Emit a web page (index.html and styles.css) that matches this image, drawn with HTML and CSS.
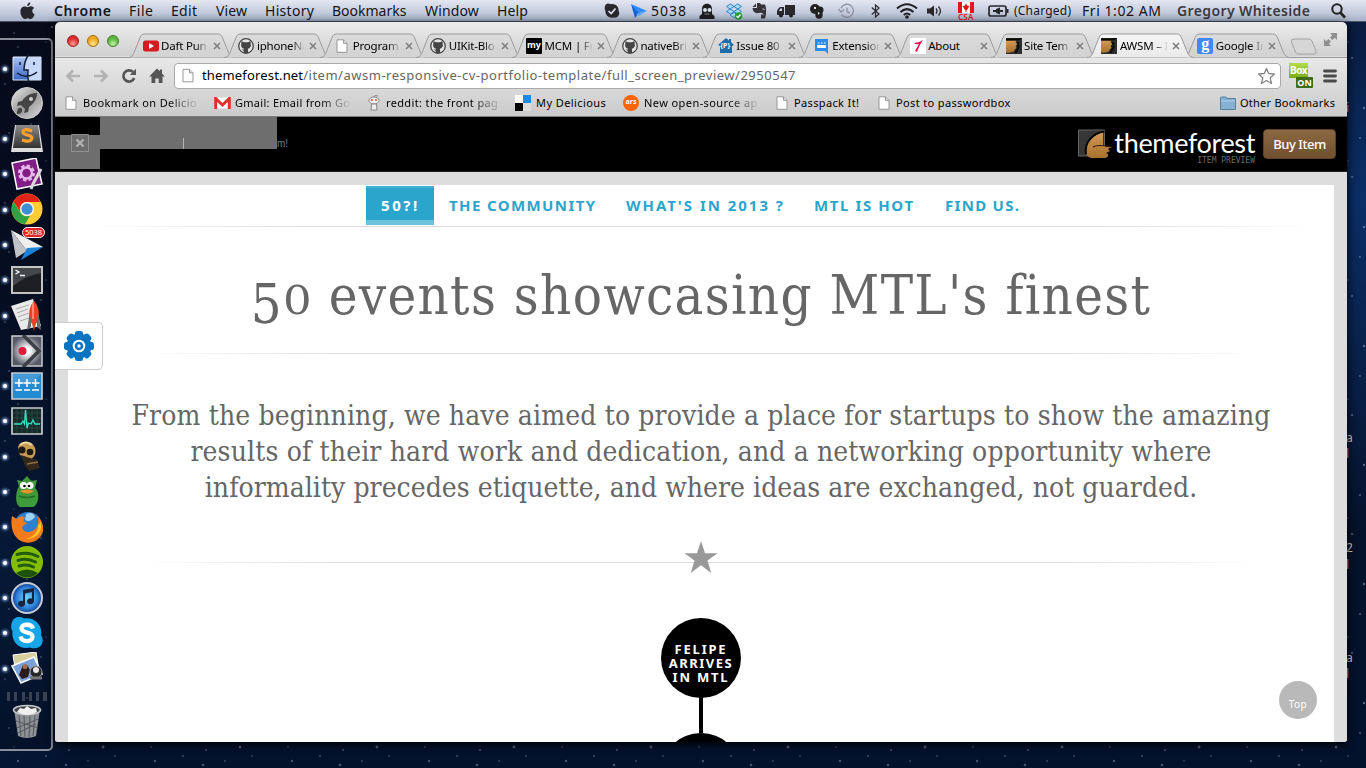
FILE: index.html
```html
<!DOCTYPE html>
<html lang="en">
<head>
<meta charset="utf-8">
<title>AWSM</title>
<link rel="stylesheet" href="styles.css">
</head>
<body>
<svg class="defs" width="0" height="0">
  <defs>
    <linearGradient id="gTab" x1="0" y1="0" x2="0" y2="1"><stop offset="0" stop-color="#dcdcdc"/><stop offset="1" stop-color="#d2d2d2"/></linearGradient>
    <linearGradient id="gAct" x1="0" y1="0" x2="0" y2="1"><stop offset="0" stop-color="#f6f6f6"/><stop offset="1" stop-color="#e9e9e9"/></linearGradient>
    <linearGradient id="gBlue" x1="0" y1="0" x2="0" y2="1"><stop offset="0" stop-color="#a9c4f5"/><stop offset="1" stop-color="#3a66c4"/></linearGradient>
    <linearGradient id="gSteel" x1="0" y1="0" x2="1" y2="1"><stop offset="0" stop-color="#eee"/><stop offset=".5" stop-color="#999"/><stop offset="1" stop-color="#ddd"/></linearGradient>
    <linearGradient id="gDark" x1="0" y1="0" x2="0" y2="1"><stop offset="0" stop-color="#8a8a8a"/><stop offset="1" stop-color="#333"/></linearGradient>
    <radialGradient id="gTunes"><stop offset="0" stop-color="#6fd8ff"/><stop offset=".7" stop-color="#2a80d8"/><stop offset="1" stop-color="#123a8a"/></radialGradient>
    <radialGradient id="gNode"><stop offset=".2" stop-color="#fff"/><stop offset="1" stop-color="#555a68"/></radialGradient>
    <linearGradient id="gWood" x1="0" y1="0" x2="0" y2="1"><stop offset="0" stop-color="#d49a55"/><stop offset="1" stop-color="#a8712e"/></linearGradient>
    <pattern id="stars" width="137" height="119" patternUnits="userSpaceOnUse">
      <g fill="#9fb4d4"><circle cx="9" cy="14" r="1" opacity=".6"/><circle cx="31" cy="5" r="1.300" opacity=".4"/><circle cx="52" cy="27" r=".9" opacity=".6"/><circle cx="77" cy="11" r="1.200" opacity=".5"/><circle cx="103" cy="33" r="1.400" opacity=".5"/><circle cx="127" cy="19" r=".9" opacity=".5"/><circle cx="18" cy="47" r="1.200" opacity=".4"/><circle cx="41" cy="62" r="1" opacity=".6"/><circle cx="66" cy="51" r="1.300" opacity=".4"/><circle cx="92" cy="70" r=".9" opacity=".7"/><circle cx="119" cy="58" r="1.200" opacity=".4"/><circle cx="5" cy="84" r="1.300" opacity=".4"/><circle cx="27" cy="103" r="1" opacity=".6"/><circle cx="58" cy="91" r="1.200" opacity=".4"/><circle cx="81" cy="110" r="1.400" opacity=".4"/><circle cx="109" cy="97" r=".9" opacity=".6"/><circle cx="131" cy="108" r="1.200" opacity=".5"/><circle cx="14" cy="33" r=".8" opacity=".5"/><circle cx="46" cy="42" r=".8" opacity=".6"/><circle cx="88" cy="47" r=".8" opacity=".5"/><circle cx="69" cy="36" r="1.100" opacity=".4"/><circle cx="115" cy="42" r=".8" opacity=".5"/></g>
    </pattern>
    <symbol id="tab" viewBox="0 0 108 25" preserveAspectRatio="none"><path d="M0 24.5C5 24.5 6 20 7.500 16L12 5C13 2 14.500 1 17 1H90.500C93 1 94.500 2 95.500 5L100 16C101.500 20 103 24.500 108 24.500" stroke="#9a9a9a"/></symbol>
    <symbol id="page" viewBox="0 0 12 14"><path d="M1 .8H7.500L11 4.300V13.300H1Z" fill="#fdfdfd" stroke="#979797"/><path d="M7.500 .8V4.300H11" fill="#ddd" stroke="#979797"/></symbol>
    <symbol id="github" viewBox="0 0 16 16"><circle cx="8" cy="8" r="7.300" fill="#e6e6e6" stroke="#444" stroke-width="1.300"/><path d="M3.600 3L6 4.200H10L12.400 3L12.800 6C13.200 9 12 10.300 9.800 10.800L10.300 15H5.700V12.800L3.400 11.600L5.700 11.500L6.200 10.800C4 10.300 2.800 9 3.200 6Z" fill="#444"/></symbol>
    <symbol id="close" viewBox="0 0 8 8"><path d="M1 1L7 7M7 1L1 7" stroke="#7d7d7d" stroke-width="1.500"/></symbol>
    <symbol id="forest" viewBox="0 0 16 16"><path d="M0 0H16V16H0Z" fill="#2e2e2e"/><path d="M0 2.500H10.500L9.500 5L11.500 5.500L9.500 8L10.500 10L8.500 11.500L8 13.500Q4 15 0 14.500Z" fill="url(#gWood)"/><path d="M0 1.500H12L15.500 0M9.500 15L12.500 9L12 4" fill="none" stroke="#0c0a05" stroke-width="1.800"/></symbol>
  </defs>
</svg>
<svg class="sky"><rect width="1366" height="768" fill="url(#stars)"/></svg>
<div class="labels"><i>i</i><i>a</i><i>l</i><i>2</i><i>l</i><i>a</i><i>l</i></div>

<header class="menubar">
  <svg width="15" height="18" viewBox="0 0 15 18"><path d="M10.300 .3C10.500 2 9 4 7.200 4.100C7 2.300 8.700 .5 10.300 .3ZM7.500 5.200C8.500 5.200 9.200 4.300 10.800 4.300C12.300 4.400 13.300 5 14 6C11.500 7.500 11.800 11 14.600 12.200C13.800 14.500 12.500 17 10.900 17C9.600 17 9.200 16.200 7.800 16.200C6.300 16.200 5.800 17 4.700 17C2.800 17 .4 13 .4 9.500C.4 6.300 2.400 4.500 4.500 4.500C5.800 4.500 6.700 5.200 7.500 5.200Z" fill="#26262c"/></svg>
  <b class="w1">Chrome</b><span class="w2">File</span><span class="w3">Edit</span><span class="w4">View</span><span class="w3">History</span><span>Bookmarks</span><span class="w4">Window</span><span class="w4">Help</span>
  <svg width="16" height="16" viewBox="0 0 16 16"><path d="M1 3C2 0 5 0 6.500 1.200C11 0 15 3.500 14.600 8C16.500 11 14 15.500 10 14.500C5.500 15.500 1 12.500 1.500 8C.5 6.500 .5 5 1 3Z" fill="#29292d"/><path d="M4.500 8L7.200 10.500L11.500 5.500" fill="none" stroke="#dde2ef" stroke-width="1.700"/></svg>
  <svg width="16" height="16" viewBox="0 0 16 16"><path d="M0 1L16 8L8 10Z" fill="#2d8cff"/><path d="M0 1L8 10L4 15Z" fill="#1464d8"/><path d="M5 11L16 8L8 13Z" fill="#5aa8ff"/></svg>
  <span class="w5">5038</span>
  <svg width="16" height="18" viewBox="0 0 16 18"><path d="M3 7C3 0 13 0 13 7V12L15.500 14V17H.5V14L3 12Z" fill="#1f1f22"/><circle cx="6" cy="8" r="2" fill="#d9deea"/><circle cx="10.500" cy="8" r="2" fill="#d9deea"/><path d="M5.500 12H10.500" stroke="#888"/></svg>
  <svg width="17" height="17" viewBox="0 0 17 17"><path d="M4.500 1L8 3.500L4 6L.5 3.500ZM11.500 1L15.500 3.500L12 6L8 3.500ZM4 6L8 8.500L4.500 11L.5 8.500ZM12 6L15.500 8.500L11.500 11L8 8.500ZM4 12L8 9.500L12 12L8 14.500Z" fill="#a8dcfa" stroke="#2b86c8"/><circle cx="12.500" cy="13" r="3.800" fill="#29a03a"/><path d="M10.500 13L12 14.500L14.500 11.500" stroke="#fff" fill="none" stroke-width="1.300"/></svg>
  <svg width="15" height="16" viewBox="0 0 15 16"><path d="M.5 4L4 .5V4ZM5 0H8L9 1.500H13C14.500 5 14.500 11 13 15.500H9V11.500H11V13.500C12 11 11 9.500 8 9.800C3 11 1 9 .5 5H5Z" fill="#333338"/><path d="M10.500 6Q12 5.500 12.500 7" stroke="#ccd3e3" fill="none"/></svg>
  <svg width="19" height="13" viewBox="0 0 19 13"><path d="M8 0H18V10H8ZM1 4L3 2H7V10H0V6Z" fill="#29292d"/><path d="M2 6L3.300 3.500H5V6Z" fill="#cdd4e3"/><circle cx="4" cy="10.500" r="2" fill="#222"/><circle cx="14" cy="10.500" r="2" fill="#222"/></svg>
  <svg width="14" height="15" viewBox="0 0 14 15"><circle cx="5" cy="5" r="5" fill="#222"/><circle cx="10" cy="6" r="3.500" fill="#222"/><circle cx="9" cy="11" r="3.700" fill="#222"/><path d="M4 3H6V5H4ZM8 8L10 9L8 11Z" fill="#dde"/></svg>
  <svg width="17" height="16" viewBox="0 0 17 16"><path d="M3 5A6.500 6.500 0 1 1 3.500 11.500M.5 6L3 9L6 6.500M9 4.500V8.500L12 10" fill="none" stroke="#8e94a3" stroke-width="1.400"/></svg>
  <svg width="9" height="14" viewBox="0 0 9 14"><path d="M.8 3.500L8 10L4.500 13V1L8 4L.8 10.500" fill="none" stroke="#29292d" stroke-width="1.200"/></svg>
  <svg width="22" height="16" viewBox="0 0 22 16"><g fill="none" stroke="#222226" stroke-width="2"><path d="M1 5.500Q11-3 21 5.500M4.500 9Q11 3.200 17.500 9M7.800 12Q11 9 14.200 12"/></g><circle cx="11" cy="14" r="1.800" fill="#222226"/></svg>
  <svg width="15" height="12" viewBox="0 0 15 12"><path d="M0 3.500H3L7 .5V11.500L3 8.500H0Z" fill="#29292d"/><path d="M9 3.500Q11 6 9 8.500M11.500 1.500Q15.500 6 11.500 10.500" fill="none" stroke="#29292d" stroke-width="1.300"/></svg>
  <span class="csa"><svg width="16" height="11" viewBox="0 0 16 11"><path d="M0 0H16V11H0Z" fill="#fff"/><path d="M0 0H4V11H0ZM12 0H16V11H12ZM8 1L9 3.500L11.500 4L9 8H8.500V10H7.500V8H7L4.500 4L7 3.500Z" fill="#e5141e"/></svg><em>CSA</em></span>
  <svg width="22" height="12" viewBox="0 0 22 12"><rect x="1" y="1" width="17" height="10" rx="2" fill="none" stroke="#29292d" stroke-width="1.700"/><path d="M19.500 4V8M5 6H9M15 6H12" stroke="#29292d" stroke-width="2"/><path d="M8 4L12 2.500V9.500L8 8Z" fill="#29292d"/></svg>
  <span class="charged">(Charged)</span><span class="clock">Fri 1:02 AM</span><b class="user">Gregory Whiteside</b>
  <svg width="15" height="16" viewBox="0 0 15 16"><circle cx="6" cy="6" r="4.700" fill="none" stroke="#222" stroke-width="2"/><path d="M9.300 9.500L14 14.500" stroke="#222" stroke-width="2.600"/></svg>
</header>

<aside class="dock">
  <div class="cell on"><svg viewBox="0 0 32 32"><path d="M2 5H30V28H2Z" fill="url(#gBlue)" stroke="#e3ebfa"/><path d="M16 5H30V28H17L16 18H13Q13 11 17 5Z" fill="#c6d8fa"/><path d="M18 2Q13 9 13 18H17Q16 25 18 31M6 21Q16 28 26 20M9 10V13M23 10V13" fill="none" stroke="#111a30" stroke-width="1.500"/></svg></div>
  <div class="cell"><svg viewBox="0 0 32 32"><circle cx="16" cy="16" r="15.500" fill="url(#gSteel)" stroke="#ccc"/><path d="M26 6C18 6 14 10 11 14L7 15L6 19L10 18L14 22L13 26L17 25L18 20C22 17 26 13 26 6ZM10 21C7 20 6 24 6 27C9 27 12 26 11 22" fill="#444"/><circle cx="20" cy="12" r="2" fill="#ccc"/></svg></div>
  <div class="cell on"><svg viewBox="0 0 32 32"><path d="M4 2H28L32 29H0Z" fill="#ddd"/><path d="M5 2H27L30 25H2Z" fill="url(#gDark)"/><path d="M21 8Q12 5 12 9C12 13 21 11 21 15Q20 20 11 17" fill="none" stroke="#ffa128" stroke-width="3.200"/></svg></div>
  <div class="cell on"><svg viewBox="0 0 32 32"><path d="M1 5L25 0L31 26L6 31Z" fill="#821c86" stroke="#fff" stroke-width="1.500"/><circle cx="15.500" cy="15" r="6.500" fill="none" stroke="#e2b8e6" stroke-width="4" stroke-dasharray="3 2"/><circle cx="15.500" cy="15" r="5.500" fill="none" stroke="#e2b8e6" stroke-width="2.500"/><path d="M30 11L22 26L20 31" stroke="#d9d9d9" stroke-width="3" fill="none"/></svg></div>
  <div class="cell on"><svg viewBox="0 0 32 32"><circle cx="16" cy="16" r="15.500" fill="#fc3"/><path d="M2.500 8.500A15.500 15.500 0 0 1 29.500 9H16A7 7 0 0 0 9.500 19Z" fill="#e2231a"/><path d="M2.500 8.500L9.500 19.500A7 7 0 0 0 19 22.500L14 31.300A15.500 15.500 0 0 1 2.500 8.500Z" fill="#2ea346"/><circle cx="16" cy="16" r="7" fill="#fff"/><circle cx="16" cy="16" r="5.700" fill="#3f8fd2"/></svg></div>
  <div class="cell on badge"><svg viewBox="0 0 32 32"><path d="M0 1L32 18L16 22Z" fill="#eee"/><path d="M0 1L16 22L5 29Z" fill="#bfc3c8"/><path d="M16 19L32 18L10 31Z" fill="#1f82d6"/></svg><em>5038</em></div>
  <div class="cell on"><svg viewBox="0 0 32 32"><path d="M1 3H31V29H1Z" fill="#1d1f22" stroke="#c4c4c4" stroke-width="2"/><path d="M2 4H30V9Q14 12 2 22Z" fill="#44474a"/><path d="M4.500 6L8 8L4.500 10M9 11.500H14" fill="none" stroke="#fff" stroke-width="1.300"/></svg></div>
  <div class="cell on"><svg viewBox="0 0 32 32"><path d="M0 7L22 0L30 27L10 31Z" fill="#e9e9e9"/><path d="M5 10L18 6M6 14L17 10M7 18L18 14M9 22L18 19" stroke="#aaa"/><path d="M19 24Q16 9 23 2Q30 9 27 24Z" fill="#ee4123"/><path d="M18.500 15L16 31L20 28V23H26V28L30 31L27.500 15L25.500 23H20.500Z" fill="#6a6d70"/><path d="M22 4V20" stroke="#ffb09a" stroke-width="1.300"/><path d="M21 24L23 32L25 24Z" fill="#d41"/></svg></div>
  <div class="cell"><svg viewBox="0 0 32 32"><path d="M1 1H31V31H1Z" fill="url(#gNode)" stroke="#ccc" stroke-width="1.500"/><path d="M12 0L28 16L12 32" fill="none" stroke="#3c3f45" stroke-width="3.500"/><circle cx="11.500" cy="16" r="4" fill="#e01a3c"/></svg></div>
  <div class="cell on"><svg viewBox="0 0 32 32"><path d="M1 3H31V29H1Z" fill="#238bd2" stroke="#c8ccd0" stroke-width="1.700"/><path d="M2 4H30L20 14H2Z" fill="#fff" opacity=".15"/><path d="M4 13H12M8 9V17M12.500 13H20M16 9V17M21 13H28.500M24.500 9V17M4.500 20H11M13 20H19M21 20H28" stroke="#fff" stroke-width="1.500"/></svg></div>
  <div class="cell on"><svg viewBox="0 0 32 32"><path d="M1 3H31V29H1Z" fill="#162a29" stroke="#c8ccd0" stroke-width="1.700"/><path d="M2 8H30M2 13H30M2 18H30M2 23H30M6 4V28M11 4V28M16 4V28M21 4V28M26 4V28" stroke="#2d4c48" stroke-width=".8"/><path d="M3 19H10L12 16L13.500 19L14.500 5L16 23L17.500 18L20 19L22 15L24 19H29" fill="none" stroke="#35e0c5" stroke-width="1.300"/></svg></div>
  <div class="cell on"><svg viewBox="0 0 32 32"><path d="M7 7C9 0 21 0 24 8C26 14 22 19 18 20L9 15Z" fill="#c89c55"/><path d="M9 5Q15 0 21 5" stroke="#efd9a0" stroke-width="2" fill="none"/><circle cx="11" cy="10" r="3.500" fill="#1d1711"/><circle cx="19" cy="12" r="3.300" fill="#1d1711"/><path d="M10 15L16 17L26 20L29 28L19 31L14 26Z" fill="#33281b"/><path d="M16 24L27 22" stroke="#8f7145" stroke-width="1.500"/></svg></div>
  <div class="cell on"><svg viewBox="0 0 32 32"><path d="M8 10L6 4L11 5L16 0L20 5L26 4L24 12C30 17 27 30 22 31H9C4 29 4 17 8 10Z" fill="#3f9a3b"/><circle cx="12.500" cy="9.500" r="3.500" fill="#fff"/><circle cx="19" cy="9.500" r="3.500" fill="#fff"/><circle cx="13.500" cy="10" r="1.300"/><circle cx="18" cy="10" r="1.300"/><path d="M9 15Q16 12 23 15Q16 20 9 15Z" fill="#f0902d"/><path d="M8 20Q16 23 24 20" stroke="#246c27" stroke-width="1.500" fill="none"/></svg></div>
  <div class="cell on"><svg viewBox="0 0 32 32"><circle cx="17" cy="15" r="14" fill="#2f7fd0"/><path d="M15 3Q22 0 24 6Q19 12 14 9Z" fill="#9dd4f5"/><path d="M1 5L6 8C8 5 12 5 14 6L12 10L16 12L11 16C12 23 21 22 25 17C28 13 28 8 25 4C34 11 35 23 26 29C13 37-3 27 1 5Z" fill="#f47b1c"/><path d="M30 11C32 21 25 28 15 28C22 26 28 21 27 14Z" fill="#ffc52e"/></svg></div>
  <div class="cell on"><svg viewBox="0 0 32 32"><circle cx="16" cy="16" r="16" fill="#84bd00"/><path d="M6 8.500Q17 5 27 10.500M7 14.500Q16 11.500 24.500 16M8 20Q16 17.500 22.500 21" fill="none" stroke="#235c0c" stroke-width="3" stroke-linecap="round"/><path d="M5 27Q16 20 27 27Q16 36 5 27Z" fill="#1c510c"/></svg></div>
  <div class="cell on"><svg viewBox="0 0 32 32"><circle cx="16" cy="16" r="15" fill="url(#gTunes)" stroke="#c7cdd6" stroke-width="2"/><path d="M12 8L23 6V19A3.500 3 0 1 1 21 16.500V10L14 11.500V22A3.500 3 0 1 1 12 19Z" fill="#17243d"/></svg></div>
  <div class="cell on"><svg viewBox="0 0 32 32"><path d="M1 5C3-1 10-1 13 1.500C23-.5 32 8 30 18C35 26 28 34 19 30.500C9 33 0 25 1.500 14C-.5 11 0 8 1 5Z" fill="#16a6e8"/><path d="M22 11.500C20 6 10 7 10.500 11.500C11 17 22 14 21.500 20C21 25.500 11 25.500 9.500 19.500" fill="none" stroke="#fff" stroke-width="4.300"/></svg></div>
  <div class="cell on"><svg viewBox="0 0 32 32"><path d="M2 3L25 0L28 19L5 22Z" fill="#d8cf9d" stroke="#fff"/><path d="M1 14L23 5L31 22L10 31Z" fill="#7aa1d8" stroke="#fff" stroke-width="1.500"/><path d="M8 23L12 13L16 13L19 18L17 25L11 27Z" fill="#2c1c19"/><circle cx="14" cy="14.500" r="2.500" fill="#a86b48"/><circle cx="25" cy="20" r="6" fill="#26282b" stroke="#999"/><circle cx="25" cy="18" r="3" fill="#e8e8e8"/><path d="M19 26H31" stroke="#777" stroke-width="3"/></svg></div>
  <div class="sep"></div>
  <svg class="trash" viewBox="0 0 32 36"><path d="M3 5L7 32Q16 36 25 32L29 5Z" fill="#8d9094"/><path d="M8 11L10 32M13 12L14 33M19 12L18 33M24 11L22 32M5 17L27 24M27 15L6 24M7 29L25 20" stroke="#55585c"/><ellipse cx="16" cy="6" rx="13.500" ry="4.500" fill="#43474d" stroke="#c5c8cc" stroke-width="1.500"/><path d="M6 8L9 4L13 5L16 2L20 5L25 4L26 8Q16 14 6 8Z" fill="#f0f0f0"/></svg>
</aside>

<main class="window">
  <div class="tabstrip">
    <div class="lights"><i class="red"></i><i class="amber"></i><i class="green"></i></div>
    <div class="tabs">
      <div class="tab"><svg class="bg"><use href="#tab"/></svg><svg class="fav" viewBox="0 0 16 16"><rect y="2.500" width="16" height="11" rx="2.500" fill="#d61a1f"/><path d="M6 5L11 8L6 11Z" fill="#fff"/></svg><span>Daft Pun</span><svg class="x"><use href="#close"/></svg></div>
      <div class="tab"><svg class="bg"><use href="#tab"/></svg><svg class="fav"><use href="#github"/></svg><span>iphoneNa</span><svg class="x"><use href="#close"/></svg></div>
      <div class="tab"><svg class="bg"><use href="#tab"/></svg><svg class="fav"><use href="#page" y="1" height="14"/></svg><span>Program</span><svg class="x"><use href="#close"/></svg></div>
      <div class="tab"><svg class="bg"><use href="#tab"/></svg><svg class="fav"><use href="#github"/></svg><span>UIKit-Blo</span><svg class="x"><use href="#close"/></svg></div>
      <div class="tab"><svg class="bg"><use href="#tab"/></svg><i class="fav my">my</i><span>MCM | Fr</span><svg class="x"><use href="#close"/></svg></div>
      <div class="tab"><svg class="bg"><use href="#tab"/></svg><svg class="fav"><use href="#github"/></svg><span>nativeBri</span><svg class="x"><use href="#close"/></svg></div>
      <div class="tab"><svg class="bg"><use href="#tab"/></svg><i class="fav pp"><svg viewBox="0 0 16 16"><path d="M0 7L8 0L11 2.500V1H13V4L16 7L14 8V15H2V8Z" fill="#1b6ca8"/></svg><em>{P}</em></i><span>Issue 80</span><svg class="x"><use href="#close"/></svg></div>
      <div class="tab"><svg class="bg"><use href="#tab"/></svg><svg class="fav" viewBox="0 0 16 16"><path d="M1 1H14V16L11 13H1Z" fill="#2a8cee"/><path d="M3.500 9.500V7.500H11.500V9.500ZM4 5H5.500M7 5H8.500M10 5H11.500" fill="#fff" stroke="#fff"/></svg><span>Extension</span><svg class="x"><use href="#close"/></svg></div>
      <div class="tab"><svg class="bg"><use href="#tab"/></svg><svg class="fav" viewBox="0 0 16 16"><path d="M0 0H16V16H0Z" fill="#fff"/><path d="M4 5Q9 5 13 2Q10 6 7 14L5 13L9 6Q6 7 4 5Z" fill="#e0124e"/></svg><span>About</span><svg class="x"><use href="#close"/></svg></div>
      <div class="tab"><svg class="bg"><use href="#tab"/></svg><svg class="fav"><use href="#forest"/></svg><span>Site Tem</span><svg class="x"><use href="#close"/></svg></div>
      <div class="tab active"><svg class="bg"><use href="#tab"/></svg><svg class="fav"><use href="#forest"/></svg><span>AWSM – I</span><svg class="x"><use href="#close"/></svg></div>
      <div class="tab"><svg class="bg"><use href="#tab"/></svg><i class="fav goo">g</i><span>Google In</span><svg class="x"><use href="#close"/></svg></div>
    </div>
    <svg class="newtab" width="27" height="17" viewBox="0 0 27 17"><path d="M4 1H19Q21 1 22 3L26 13Q26.500 16 24 16H9Q6.500 16 5.500 14L1.500 4Q1 1 4 1Z" fill="#d6d6d6" stroke="#a2a2a2"/></svg>
    <svg class="full" width="15" height="15" viewBox="0 0 15 15"><path d="M7 1H14V8L11.800 5.800L9.500 8L7 5.500L9.200 3.200ZM8 14H1V7L3.200 9.200L5.500 7L8 9.500L5.800 11.800Z" fill="#8f8f8f"/></svg>
  </div>
  <div class="toolbar">
    <svg width="16" height="14" viewBox="0 0 16 14"><path d="M15 7H3M8 1.500L2.500 7L8 12.500" fill="none" stroke="#b2b2b2" stroke-width="2.600"/></svg>
    <svg width="16" height="14" viewBox="0 0 16 14"><path d="M1 7H13M8 1.500L13.500 7L8 12.500" fill="none" stroke="#b2b2b2" stroke-width="2.600"/></svg>
    <svg width="16" height="16" viewBox="0 0 16 16"><path d="M12 4A5.600 5.600 0 1 0 13.200 10" fill="none" stroke="#555" stroke-width="2.700"/><path d="M15 .8V7H8.800Z" fill="#555"/></svg>
    <svg width="16" height="16" viewBox="0 0 16 16"><path d="M8 .5L10.800 3.200V1.500H13V5.500L15.800 8.500H13.500V15H9.700V10.500H6.300V15H2.500V8.500H.2Z" fill="#555"/></svg>
    <div class="omni"><svg width="12" height="15"><use href="#page"/></svg><p><b>themeforest.net</b>/item/awsm-responsive-cv-portfolio-template/full_screen_preview/2950547</p><svg width="19" height="18" viewBox="0 0 19 18"><path d="M9.500 1.500L11.700 6.500L17.500 7L13.200 10.800L14.500 16.500L9.500 13.500L4.500 16.500L5.800 10.800L1.500 7L7.300 6.500Z" fill="#fff" stroke="#858585" stroke-width="1.300" stroke-linejoin="round"/></svg></div>
    <div class="box"><i>Box</i><em>ON</em></div>
    <svg class="burger" width="14" height="14" viewBox="0 0 14 14"><path d="M1.500 2H12.500M1.500 7H12.500M1.500 12H12.500" stroke="#4a4a4a" stroke-width="2.800" stroke-linecap="round"/></svg>
  </div>
  <div class="bookmarks">
    <div><svg width="12" height="14"><use href="#page"/></svg><span class="fade">Bookmark on Delicio</span></div>
    <div><svg width="17" height="12" viewBox="0 0 17 12"><path d="M.5 .5H16.500V11.500H.5Z" fill="#fff"/><path d="M1.700 12V1.500L8.500 8L15.300 1.500V12" fill="none" stroke="#e0302a" stroke-width="3"/></svg><span class="fade">Gmail: Email from Go</span></div>
    <div><svg width="12" height="16" viewBox="0 0 12 16"><ellipse cx="6" cy="5.500" rx="5" ry="3.500" fill="#f4f4f4" stroke="#888"/><path d="M3.500 9H8.500L9 15H3Z" fill="#eee" stroke="#888"/><path d="M6 2L7 .5L10 1" fill="none" stroke="#888"/><circle cx="4" cy="5" r="1.100" fill="#f5562a"/><circle cx="8" cy="5" r="1.100" fill="#f5562a"/></svg><span class="fade">reddit: the front pag</span></div>
    <div><svg width="16" height="16" viewBox="0 0 16 16"><path d="M0 0H8V8H0Z" fill="#fff"/><path d="M8 0H16V8H8Z" fill="#2089e5"/><path d="M0 8H8V16H0Z"/><path d="M8 8H16V16H8Z" fill="#ddd"/></svg><span>My Delicious</span></div>
    <div><i class="ars">ars</i><span class="fade">New open-source ap</span></div>
    <div><svg width="12" height="14"><use href="#page"/></svg><span>Passpack It!</span></div>
    <div><svg width="12" height="14"><use href="#page"/></svg><span>Post to passwordbox</span></div>
    <div class="other"><svg width="16" height="14" viewBox="0 0 16 14"><path d="M.5 2Q.5 1 1.500 1H6L7 2.500H15.500V13.500H.5Z" fill="#86b0d2" stroke="#54809f"/><path d="M1 5H15" stroke="#b8d5ea"/></svg><span>Other Bookmarks</span></div>
  </div>

  <div class="preview">
    <i class="mask wide"></i><i class="mask small"></i><i class="tick"></i>
    <svg class="dismiss" width="18" height="18" viewBox="0 0 18 18"><path d="M.5 .5H17.500V17.500H.5Z" fill="#6e6e6e" stroke="#919191"/><path d="M5.500 5.500L12.500 12.500M12.500 5.500L5.500 12.500" stroke="#b0b0b0" stroke-width="2.400"/></svg>
    <span class="tail">m!</span>
    <div class="brand">
      <svg width="35" height="30" viewBox="0 0 35 30"><path d="M1.500 1H27.500V27H1.500Z" fill="#363636" stroke="#666"/><path d="M27 3C17 5 8 14 9 24Q10 28 14 29H28Q32 28 31 25L29 24L33 22L31 20L35 18L26 17V4Z" fill="url(#gWood)"/><path d="M27.500 2.500C16 4 7 13 9 25" fill="none" stroke="#080604" stroke-width="2"/><path d="M16 18Q21 15 33 18" fill="none" stroke="#2c1806" stroke-width="1.200"/></svg>
      <div class="word"><strong>themeforest</strong><small>ITEM PREVIEW</small></div>
    </div>
    <button class="buy">Buy Item</button>
  </div>

  <section class="page">
    <div class="sheet">
      <nav><a class="cur">50?!</a><a class="n1">THE COMMUNITY</a><a class="n2">WHAT'S IN 2013 ?</a><a class="n3">MTL IS HOT</a><a class="n4">FIND US.</a></nav>
      <hr class="long">
      <h1><span class="five">5</span><span class="zero">0</span> events showcasing MTL's finest</h1>
      <hr>
      <p class="intro"><span>From the beginning, we have aimed to provide a place for startups to show the amazing</span><br><span>results of their hard work and dedication, and a networking opportunity where</span><br><span class="last">informality precedes etiquette, and where ideas are exchanged, not guarded.</span></p>
      <div class="rule"><hr><svg width="34" height="34" viewBox="0 0 34 34"><path d="M17 1L21 13.200H33.500L23.500 20.500L27.200 33L17 25.300L6.800 33L10.500 20.500L.5 13.200H13Z" fill="#999"/></svg></div>
      <div class="timeline"><div class="node"><span class="f1">FELIPE</span><span class="f2">ARRIVES</span><span class="f3">IN MTL</span></div><i></i><div class="node"></div></div>
    </div>
    <div class="gear"><svg width="30" height="30" viewBox="-15 -15 30 30"><g fill="#0a74c0"><circle r="12.500"/><g id="t"><rect x="-4" y="-15" width="8" height="30" rx="2.500"/><rect x="-15" y="-4" width="30" height="8" rx="2.500"/></g><use href="#t" transform="rotate(45)"/></g><circle r="6.300" fill="#fff"/><circle r="4.300" fill="#0a74c0"/><circle r="1.700" fill="#fff"/></svg></div>
    <a class="top">Top</a>
  </section>
</main>
</body>
</html>
```
FILE: styles.css
```css
* { box-sizing: border-box; }
body { margin: 0; width: 1366px; height: 768px; overflow: hidden; position: relative; font-family: "Noto Sans", sans-serif; color: #111;
  background: radial-gradient(ellipse 150px 330px at 1366px 200px, #0a2f68, rgba(6,24,60,0)), radial-gradient(ellipse 130px 260px at 0 560px, #08264e, rgba(4,20,48,0)), linear-gradient(#090a19, #07122a 50%, #03122c 97%); }
svg, i, em { display: block; font-style: normal; }
i, em { flex: none; }
.defs { position: absolute; }
.sky { position: absolute; inset: 0; width: 1366px; height: 768px; }
.labels { position: absolute; left: 1346px; top: 0; font: 12px "Noto Sans", sans-serif; color: #d0d0d0; }
.labels i { position: absolute; line-height: 14px; }
.labels i:nth-child(1) { top: 101px; } .labels i:nth-child(2) { top: 431px; } .labels i:nth-child(3) { top: 447px; }
.labels i:nth-child(4) { top: 541px; } .labels i:nth-child(5) { top: 558px; } .labels i:nth-child(6) { top: 651px; } .labels i:nth-child(7) { top: 667px; }

.menubar { position: absolute; left: 0; top: 0; width: 1366px; height: 22px; padding-left: 20px; display: grid; align-items: center; font-size: 14px; line-height: 22px; white-space: nowrap; color: #14141a;
  grid-template-columns: 34px 75px 42px 45px 49px 67px 93px 72px 107px 27px 20px 48px 27px 26px 25px 33px 28px 33px 25px 31px 31px 30px 26px 68px 95px 154px 20px;
  background: linear-gradient(#e4e7f2, #c3cadc 60%, #a9b2ca); border-bottom: 1px solid #4c5468; }
.menubar b { font-weight: 600; }
.w1 { letter-spacing: .61px; } .w2 { letter-spacing: .53px; } .w3 { letter-spacing: .31px; } .w4 { letter-spacing: .15px; } .w5 { letter-spacing: .98px; }
.charged { font-size: 12px; letter-spacing: .21px; } .clock { letter-spacing: .56px; } .user { letter-spacing: .38px; color: #3a3a40; }
.csa em { font-size: 8px; line-height: 8px; height: 7px; color: #e5141e; font-weight: 600; letter-spacing: .2px; }

.dock { position: absolute; left: -6px; top: 38px; width: 59px; height: 713px; border: 2px solid #8b8f9c; border-radius: 5px; padding: 10.500px 0 0 15px; background: rgba(4,10,28,.45); }
.cell { height: 35.300px; display: flex; align-items: center; position: relative; }
.cell > svg { width: 32px; height: 32px; }
.cell.on::before { content: ""; position: absolute; left: -8px; top: 16px; width: 4px; height: 4px; border-radius: 50%; background: #fff; box-shadow: 0 0 3px 1px #8db4ee; }
.badge em { position: absolute; left: 11px; top: 0; height: 11px; padding: 0 2px; border-radius: 6px; border: 1px solid #fff; background: #e3202a; color: #fff; font-size: 7.500px; line-height: 9px; }
.sep { width: 40px; height: 9px; margin: 6px 0 0 -4px; background: repeating-linear-gradient(90deg, #3a4150 0 3px, transparent 3px 7.300px); }
.trash { width: 32px; height: 36px; margin-top: 3px; }

.window { position: absolute; left: 55px; top: 22px; width: 1292px; height: 720px; border-radius: 5px 5px 3px 3px; overflow: hidden; background: linear-gradient(#ececec, #d0d0d0 34px, #e8e8e8 35px, #cbcbcb 94px); box-shadow: 0 2px 10px #000; display: flex; flex-direction: column; }
.tabstrip { height: 36px; flex: none; display: flex; position: relative; border-bottom: 1px solid #9a9a9a; }
.lights { display: flex; gap: 8px; padding: 13px 0 0 12px; width: 73px; flex: none; }
.lights i { width: 12px; height: 12px; border-radius: 50%; border: 1px solid; }
.red { background: radial-gradient(circle at 50% 80%, #ff9d98, #dc2b2b 60%); border-color: #9a2022 !important; }
.amber { background: radial-gradient(circle at 50% 80%, #ffe68a, #eda520 60%); border-color: #a06c12 !important; }
.green { background: radial-gradient(circle at 50% 80%, #c6f3a4, #59b53c 60%); border-color: #3e7d2a !important; }
.tabs { display: flex; margin-top: 11px; height: 25px; }
.tab { width: 95.900px; flex: none; position: relative; display: flex; align-items: center; height: 25px; padding: 0 0 0 14.500px; }
.bg { position: absolute; left: 0; top: 0; width: 107px; height: 25px; fill: url(#gTab); }
.tab.active { z-index: 2; }
.active .bg { fill: url(#gAct); }
.fav { width: 16px; height: 16px; flex: none; position: relative; z-index: 1; }
.tab span { position: relative; z-index: 1; margin-left: 2.500px; width: 50px; margin-right: -3px; overflow: hidden; white-space: nowrap; font-size: 11.500px; letter-spacing: -.2px; line-height: 18px; color: #000; -webkit-mask-image: linear-gradient(90deg, #000 34px, transparent 48px); mask-image: linear-gradient(90deg, #000 34px, transparent 48px); }
.tab:nth-child(9) span { -webkit-mask-image: none; mask-image: none; }
.x { width: 8px; height: 8px; position: relative; z-index: 1; margin-left: 5px; flex: none; }
.my { background: #000; color: #fff; font: bold 9px/14px "Noto Sans", sans-serif; text-align: center; border-radius: 1px; }
.pp svg { width: 16px; height: 16px; }
.pp em { position: absolute; left: 2.500px; top: 3px; color: #fff; font: bold 7px/10px "Noto Sans", sans-serif; }
.goo { background: #4387f5; border-radius: 2px; color: #fff; font: bold 16px/12px "Liberation Serif", serif; text-align: center; }
.newtab { margin: 16px 0 0 11px; flex: none; }
.full { margin: 10px 0 0 6px; flex: none; }

.toolbar { height: 34px; flex: none; display: grid; grid-template-columns: 28px 28px 28px 25px 1107px 8px 34px 14px; align-items: center; padding: 1px 0 0 10px; }
.omni { height: 26px; background: #fff; border: 1px solid #a9a9a9; border-radius: 4px; display: flex; align-items: center; padding: 0 4px 0 7px; }
.omni p { margin: 0 auto 1px 8px; font-size: 13px; letter-spacing: .51px; color: #666; white-space: nowrap; line-height: 20px; }
.omni b { font-weight: 400; color: #000; letter-spacing: .16px; }
.box { grid-column: 7; position: relative; height: 25px; color: #fff; }
.box i { width: 19px; height: 15px; background: linear-gradient(#b3dc4c, #78ac1c); font: bold 10px/15px "Noto Sans", sans-serif; text-align: center; letter-spacing: -.5px; }
.box em { position: absolute; left: 7px; top: 14px; width: 17px; height: 11px; background: #3f6d10; border-radius: 1px; font: bold 9px/11px "Noto Sans", sans-serif; text-align: center; }

.bookmarks { height: 25px; flex: none; display: grid; grid-template-columns: 149px 154px 147px 107px 154px 102px 341px auto; padding-left: 10px; border-bottom: 1px solid #7c7c7c; font-size: 11px; letter-spacing: .36px; line-height: 22px; white-space: nowrap; color: #000; }
.bookmarks div { display: flex; align-items: center; gap: 6px; padding-bottom: 2px; }
.bookmarks div:nth-child(2) { gap: 4px; letter-spacing: .28px; }
.bookmarks div:nth-child(4) { gap: 5px; letter-spacing: .42px; }
.bookmarks div:nth-child(5) { gap: 5px; letter-spacing: .42px; padding-left: 1px; }
.bookmarks .other { gap: 4px; letter-spacing: .25px; padding-left: 1px; }
.fade { width: 116px; overflow: hidden; -webkit-mask-image: linear-gradient(90deg, #000 85px, transparent 117px); mask-image: linear-gradient(90deg, #000 85px, transparent 117px); }
.ars { width: 16px; height: 16px; border-radius: 50%; background: #f60; color: #fff; font: bold 7px/14px "Noto Sans", sans-serif; letter-spacing: 0; text-align: center; }

.preview { height: 55px; flex: none; background: #000; border-bottom: 1px solid #222; position: relative; display: flex; justify-content: flex-end; }
.mask { position: absolute; background: #6e6e6e; }
.wide { left: 45px; top: 0; width: 177px; height: 32px; }
.small { left: 5px; top: 18px; width: 40px; height: 34px; }
.tick { position: absolute; left: 128px; top: 21px; width: 1px; height: 11px; background: #b5b5b5; }
.dismiss { position: absolute; left: 16px; top: 17px; }
.tail { position: absolute; left: 222px; top: 21px; font: 10px/12px "Liberation Sans", sans-serif; color: #777; }
.brand { display: flex; gap: 1px; margin: 12px 8px 0 0; }
.word { display: flex; flex-direction: column; align-items: flex-end; width: 142px; }
.word strong { font: 400 27px/28px Lato, sans-serif; letter-spacing: -.356px; color: #fff; }
.word small { font: 8px/8px "DejaVu Sans Mono", monospace; color: #6a6a6a; }
.buy { width: 73px; height: 30px; margin: 12px 11px 0 0; padding: 0; border: 1px solid #5d4226; border-radius: 4px; background: linear-gradient(#8b6843, #70502e); color: #fff; font: 500 13px "Noto Sans", sans-serif; letter-spacing: -.45px; }

.page { flex: 1; background: #ddd; padding: 13px 13px 0; position: relative; overflow: hidden; }
.sheet { background: #fff; height: 560px; display: flex; flex-direction: column; align-items: center; }
.sheet > * { flex: none; }
nav { align-self: stretch; padding: 1px 0 0 298px; display: grid; grid-template-columns: 83px 177px 188px 131px 90px; font-weight: 700; font-size: 15px; line-height: 39px; color: #2ba5cb; white-space: nowrap; }
.cur { width: 68px; height: 39px; padding-left: 15px; color: #fff; letter-spacing: 2.600px; background: #2ba5cb; border-top: 2px solid #46b1d2; border-bottom: 5px solid #6bc0da; line-height: 34px; }
.n1 { letter-spacing: 1.400px; } .n2 { letter-spacing: 1.970px; } .n3 { letter-spacing: 1.600px; } .n4 { letter-spacing: 1.290px; }
hr { width: 1130px; height: 1px; border: 0; margin: 0; background: linear-gradient(90deg, transparent, #ddd 18%, #ddd 82%, transparent); }
hr.long { width: 1240px; margin-top: 1px; }
h1 { margin: 34px 0 0; height: 92px; font: 400 54px/70px "DejaVu Serif Condensed", "DejaVu Serif", serif; letter-spacing: 1.300px; color: #666; white-space: nowrap; }
.five { display: inline-block; line-height: 1; transform: translateY(9px); }
.zero { display: inline-block; line-height: 1; font-size: 40px; transform: scaleX(1.25); transform-origin: 0 0; width: 29px; }
.intro { margin: 44px 0 0; text-align: center; font: 28px/36px "DejaVu Serif Condensed", "DejaVu Serif", serif; letter-spacing: .134px; color: #666; white-space: nowrap; }
.last { letter-spacing: .04px; }
.rule { margin-top: 34px; height: 34px; display: grid; place-items: center; }
.rule > * { grid-area: 1 / 1; }
.rule hr { margin-top: 10px; }
.timeline { margin-top: 44px; display: flex; flex-direction: column; align-items: center; }
.timeline i { width: 4px; height: 36px; background: #000; margin-top: -1px; }
.node { width: 80px; height: 80px; border-radius: 50%; background: #000; color: #fff; font: 700 13px/14px "Noto Sans", sans-serif; display: flex; flex-direction: column; align-items: center; padding-top: 24px; }
.f1 { letter-spacing: 1.780px; } .f2 { letter-spacing: 1.500px; } .f3 { letter-spacing: 1.790px; }
.gear { position: absolute; left: 0; top: 150px; width: 48px; height: 48px; background: #fff; border: 1px solid #ccc; border-left: 0; border-radius: 0 5px 5px 0; display: grid; place-items: center; }
.top { position: absolute; right: 30px; bottom: 23px; width: 38px; height: 38px; border-radius: 50%; background: #b9b9b9; color: #fff; font-size: 10px; line-height: 46px; text-align: center; letter-spacing: .4px; }
```
